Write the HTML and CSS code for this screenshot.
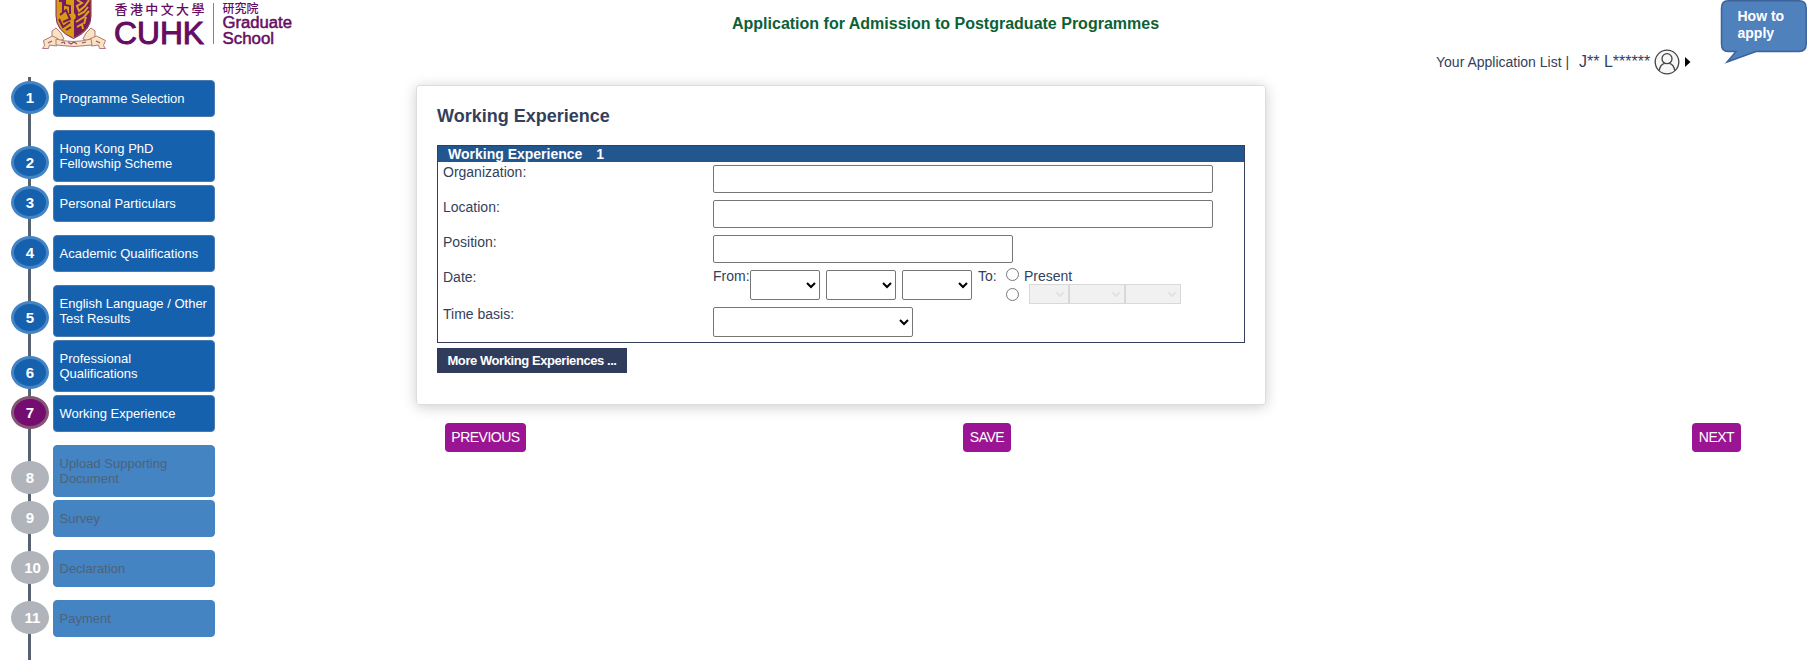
FILE: index.html
```html
<!DOCTYPE html>
<html lang="en">
<head>
<meta charset="utf-8">
<title>Application for Admission</title>
<link rel="stylesheet" href="styles.css">
</head>
<body>
<header class="header">
  <svg class="logo" width="300" height="56" viewBox="0 0 300 56">
    <path d="M56-4H91V16Q91 31 73.500 38.500Q56 31 56 16Z" fill="#d99a16" stroke="#7b2a63" stroke-width="1"/>
    <path d="M74-4H90.500V17Q90 30 74 37.500Z" fill="#761b5c"/>
    <path d="M59 1h4v11M65 0v5l5 1v8M60 15l6-5 4 9-7 3M59 19l4 8 7-5M66 30l5-3" fill="none" stroke="#761b5c" stroke-width="2"/>
    <path d="M77 0l5 3-5 3 2 5 6-5 4-6M78 15l6-3 4-5M76 22l8-5 5-6M77 27l5-3 1 5M86 17l-2 7M72 13q4 2 2 6" fill="none" stroke="#e0a21f" stroke-width="2"/>
    <g fill="#fae3c0" stroke="#b07a80" stroke-width="1">
      <path d="M52 31l4-3 5 5 3 6-7 3-5-6zM95 31l-4-3-5 5-3 6 7 3 5-6z"/>
      <path d="M43.500 40.500l9-4.500 6 3-2 7-7-1-1 3.500h-6l2-3zM105.500 40.500l-9-4.500-7 3 2 7 7-1 1 3.500h6l-2-3z"/>
      <path d="M56 39q17 5 35 0l1 6q-18 3-36 0z"/>
    </g>
    <path d="M61 43l3-1 1 2M68 42l3 2 3-2 3 2M82 43l4-1M48 43l4-2M96 41l4 2" stroke="#92536e" fill="none" stroke-width="1.200"/>
    <g fill="#660d62">
      <text class="logo-cjk" x="114.500" y="14" font-size="13" textLength="90">香港中文大學</text>
      <text class="logo-name" x="114" y="43.500" font-size="30.500" textLength="90" lengthAdjust="spacingAndGlyphs">CUHK</text>
      <text class="logo-cjk" x="222.500" y="12.500" font-size="12" textLength="36">研究院</text>
      <text class="logo-school" x="222.500" y="28" font-size="16" textLength="69.500" lengthAdjust="spacingAndGlyphs">Graduate</text>
      <text class="logo-school" x="222.500" y="43.500" font-size="16" textLength="51.500" lengthAdjust="spacingAndGlyphs">School</text>
    </g>
    <path d="M213.500 3V44" stroke="#a66f9f"/>
  </svg>
  <h1 class="site-title">Application for Admission to Postgraduate Programmes</h1>
  <div class="user">
    <span class="list-link">Your Application List |</span>
    <span class="user-name">J** L******</span>
    <svg class="avatar" width="26" height="26" viewBox="0 0 26 26" fill="none" stroke="#444" stroke-width="1.300">
      <circle cx="13" cy="13" r="11.800" fill="#f7f7f7"/><circle cx="13" cy="9.700" r="5"/><path d="M5.300 21.500c.5-4 2.700-6.500 5.300-7.200M20.700 21.500c-.5-4-2.700-6.500-5.300-7.200"/>
    </svg>
    <svg class="caret" width="6" height="10" viewBox="0 0 6 10"><path d="M0 0L5.500 5L0 10Z"/></svg>
  </div>
  <svg class="bubble" width="88" height="66" viewBox="0 0 88 66">
    <path d="M8 .8H79Q86.200 .8 86.200 8V44Q86.200 51.500 79 51.500H36L7 62L16 51.500H8Q1.500 51.500 1.500 44V8Q1.500 .8 8 .8Z" fill="#4f81bd" stroke="#3c629a" stroke-width="1.500"/>
    <text x="17.500" y="21">How to</text><text x="17.500" y="38">apply</text>
  </svg>
</header>
<div class="page">
  <nav class="steps">
    <a class="step"><b class="num">1</b><span class="name">Programme Selection</span></a>
    <a class="step tall"><b class="num">2</b><span class="name">Hong Kong PhD Fellowship Scheme</span></a>
    <a class="step"><b class="num">3</b><span class="name">Personal Particulars</span></a>
    <a class="step"><b class="num">4</b><span class="name">Academic Qualifications</span></a>
    <a class="step tall"><b class="num">5</b><span class="name">English Language / Other Test Results</span></a>
    <a class="step tall"><b class="num">6</b><span class="name">Professional Qualifications</span></a>
    <a class="step current"><b class="num">7</b><span class="name">Working Experience</span></a>
    <a class="step tall off"><b class="num">8</b><span class="name">Upload Supporting Document</span></a>
    <a class="step off"><b class="num">9</b><span class="name">Survey</span></a>
    <a class="step off"><b class="num wide">10</b><span class="name">Declaration</span></a>
    <a class="step off"><b class="num wide">11</b><span class="name">Payment</span></a>
  </nav>
  <main class="main">
    <section class="card">
      <h2 class="card-title">Working Experience</h2>
      <div class="record">
        <div class="record-head"><span>Working Experience</span><span>1</span></div>
        <div class="row"><label class="label">Organization:</label><input class="field" type="text"></div>
        <div class="row"><label class="label">Location:</label><input class="field" type="text"></div>
        <div class="row"><label class="label">Position:</label><input class="field short" type="text"></div>
        <div class="row date-row"><label class="label">Date:</label>
          <span class="from">From:</span>
          <select class="pick"></select><select class="pick"></select><select class="pick"></select>
          <span class="to">To:</span>
          <div class="ends">
            <label class="end"><input class="radio" type="radio" name="to"><span>Present</span></label>
            <div class="end"><input class="radio" type="radio" name="to"><span class="off-picks"><select class="off-pick day" disabled></select><select class="off-pick" disabled></select><select class="off-pick" disabled></select></span></div>
          </div>
        </div>
        <div class="row"><label class="label">Time basis:</label><select class="pick basis"></select></div>
      </div>
      <button class="more">More Working Experiences ...</button>
    </section>
    <div class="actions"><button class="action prev">PREVIOUS</button><button class="action save">SAVE</button><button class="action next">NEXT</button></div>
  </main>
</div>
</body>
</html>
```
FILE: styles.css
```css
* { box-sizing: border-box; }
body { margin: 0; height: 660px; overflow: hidden; background: #fff; color: #333f5b; font: 14px/20px "Liberation Sans", Arial, sans-serif; }
button, input, select { margin: 0; font-family: inherit; }
.header { display: flex; align-items: flex-start; height: 77px; }
.logo { flex: none; }
.logo-cjk { font-family: "Noto Sans CJK TC", sans-serif; font-weight: 500; }
.logo-name { font-family: "Liberation Sans", sans-serif; stroke: #660d62; stroke-width: 1px; }
.logo-school { font-family: "Liberation Sans", sans-serif; stroke: #660d62; stroke-width: .5px; }
.site-title { margin: 14px 0 0 432px; width: 428px; font-size: 16px; line-height: 20px; color: #0b6135; white-space: nowrap; }
.user { display: flex; align-items: center; margin: 49px 0 0 276px; width: 285px; height: 26px; white-space: nowrap; }
.list-link { width: 143px; }
.user-name { width: 75px; font-size: 16px; }
.avatar { flex: none; margin-right: 5px; }
.caret { flex: none; }
.bubble { flex: none; margin-left: -1px; }
.bubble text { font-weight: bold; font-size: 14px; fill: #fff; }
.page { display: flex; height: 583px; }
.steps { width: 416px; height: 583px; padding: 3px 0 0 11px; background: linear-gradient(#58616f, #58616f) 28px 0 / 3px 100% no-repeat; }
.step { display: flex; align-items: flex-start; gap: 4px; height: 50px; }
.step.tall { height: 55px; }
.num { display: flex; align-items: center; justify-content: center; width: 38px; height: 33px; margin-top: 1px; border: 3px solid #4484c4; border-radius: 50%; background: #1661ae; color: #fff; font-size: 15px; }
.num.wide { padding-left: 5px; }
.name { display: flex; align-items: center; width: 162px; height: 37px; padding: 0 5px 0 5.5px; border: 1px solid #4c7aae; border-radius: 4px; background: #1661ae; color: #fff; font-size: 13px; line-height: 15px; }
.tall .num { margin-top: 16px; }
.tall .name { height: 52px; }
.current .num { background: #750d70; border-color: #855575; }
.off .num { background: #b1b5bb; border-color: #b1b5bb; }
.off .name { background: #4484c3; border-color: #4484c3; color: #4f6276; }
.main { width: 1392px; padding-top: 8px; }
.card { width: 850px; height: 320px; padding: 20px; border: 1px solid #ddd; border-radius: 3px; box-shadow: 0 2px 14px rgba(0,0,0,.2); }
.card-title { margin: 0 0 19px; font-size: 18px; line-height: 20px; }
.record { width: 808px; height: 198px; border: 1px solid #333f5b; }
.record-head { display: flex; gap: 14px; height: 16px; padding-left: 10px; background: #22568f; color: #fff; font-weight: bold; line-height: 17px; }
.row { display: flex; align-items: flex-start; height: 35px; }
.date-row { height: 37px; }
.label { width: 275px; padding-left: 5px; }
.field { width: 500px; height: 28px; margin-top: 3px; border: 1px solid #767676; border-radius: 2px; }
.field.short { width: 300px; }
.from { width: 37px; line-height: 18px; }
.pick { width: 70px; height: 30px; margin: 3px 6px 0 0; border: 1px solid #767676; border-radius: 2px; background-color: #fff; color: #000; }
.pick.basis { width: 200px; }
.to { width: 28px; line-height: 18px; }
.end { display: flex; height: 20px; line-height: 18px; }
.radio { width: 13px; height: 13px; margin: 1px 5px 0 0; }
.off-picks { display: flex; margin: -3px 0 0 5px; }
.off-pick { width: 56px; height: 20px; border: 1px solid #c4c4c4; border-radius: 0; background-color: #ebebeb; color: #d4d4d4; opacity: .65; }
.off-pick.day { width: 40px; }
.more { display: block; width: 190px; height: 25px; margin-top: 5px; padding: 0; border: 0; background: #303c5c; color: #fff; font-size: 13px; font-weight: bold; letter-spacing: -.43px; }
.actions { display: flex; padding: 18px 0 0 29px; }
.action { height: 29px; padding: 0 0 1px; border: 0; border-radius: 4px; background: #9a1494; color: #fff; font-size: 14px; letter-spacing: -.5px; }
.prev { width: 81px; }
.save { width: 48px; margin-left: 437px; }
.next { width: 49px; margin-left: 681px; }
```
